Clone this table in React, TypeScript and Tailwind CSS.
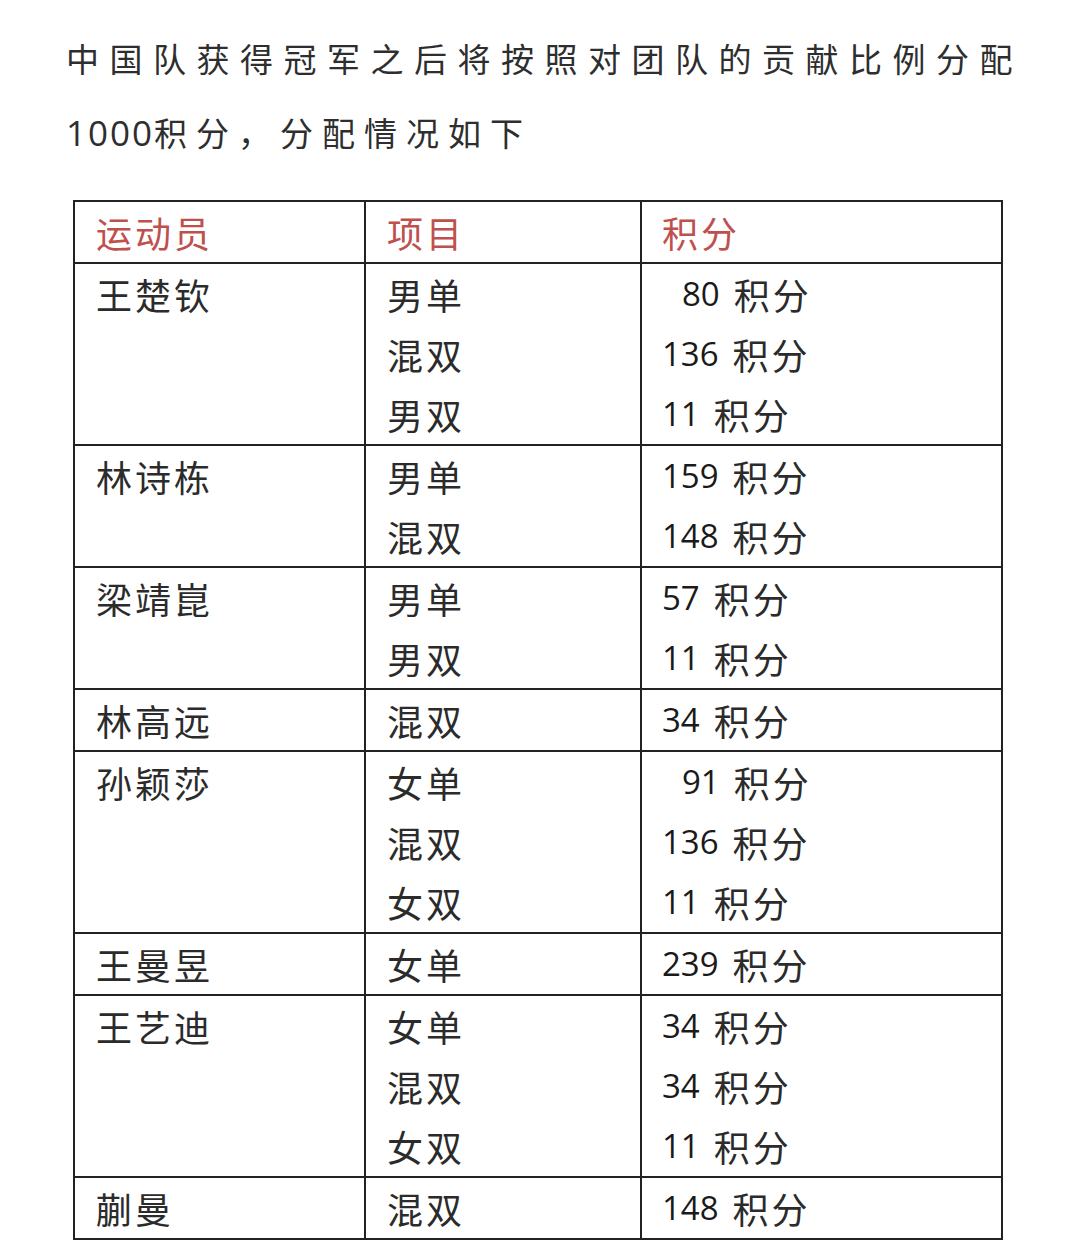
import React from "react";

type Item = { event: string; points: string; indent?: boolean };
type Row = { name: string; items: Item[] };

const rows: Row[] = [
  {
    name: "王楚钦",
    items: [
      { event: "男单", points: "80", indent: true },
      { event: "混双", points: "136" },
      { event: "男双", points: "11" },
    ],
  },
  {
    name: "林诗栋",
    items: [
      { event: "男单", points: "159" },
      { event: "混双", points: "148" },
    ],
  },
  {
    name: "梁靖崑",
    items: [
      { event: "男单", points: "57" },
      { event: "男双", points: "11" },
    ],
  },
  { name: "林高远", items: [{ event: "混双", points: "34" }] },
  {
    name: "孙颖莎",
    items: [
      { event: "女单", points: "91", indent: true },
      { event: "混双", points: "136" },
      { event: "女双", points: "11" },
    ],
  },
  { name: "王曼昱", items: [{ event: "女单", points: "239" }] },
  {
    name: "王艺迪",
    items: [
      { event: "女单", points: "34" },
      { event: "混双", points: "34" },
      { event: "女双", points: "11" },
    ],
  },
  { name: "蒯曼", items: [{ event: "混双", points: "148" }] },
];

const cjk = "font-['Noto_Sans_CJK_SC',sans-serif]";
const num = "font-['Open_Sans','Noto_Sans_CJK_SC',sans-serif]";

function Line({ children, className = "" }: { children?: React.ReactNode; className?: string }) {
  return <div className={`flex h-[60px] items-center ${className}`}>{children}</div>;
}

export default function App() {
  return (
    <div className={`min-h-[1241px] bg-white pl-[66px] pt-[21px] ${cjk}`}>
      {/* Intro text */}
      <p className="text-[33px] leading-[74px] tracking-[10.5px] text-[#2e2e2e]">
        中国队获得冠军之后将按照对团队的贡献比例分配
        <br />
        <span className={`${num} text-[35px] tracking-[2px]`}>1000</span>
        <span className="tracking-[9px]">积分，分配情况如下</span>
      </p>

      {/* Points table */}
      <table className="mt-[30px] ml-[7px] w-[928px] table-fixed border-collapse border-2 border-[#222] text-[36px] text-[#2b2b2b]">
        <colgroup>
          <col className="w-[291px]" />
          <col className="w-[276px]" />
          <col className="w-[361px]" />
        </colgroup>
        <thead>
          <tr className="text-[#c0504d]">
            <th className="border-2 border-[#222] pl-[21px] text-left font-normal">
              <Line className="tracking-[3px]">运动员</Line>
            </th>
            <th className="border-2 border-[#222] pl-[21px] text-left font-normal">
              <Line className="tracking-[3px]">项目</Line>
            </th>
            <th className="border-2 border-[#222] pl-[20px] text-left font-normal">
              <Line className="tracking-[3px]">积分</Line>
            </th>
          </tr>
        </thead>
        <tbody>
          {rows.map((row) => (
            <tr key={row.name}>
              <td className="border-2 border-[#222] pl-[21px] align-top">
                <Line className="tracking-[3px]">{row.name}</Line>
              </td>
              <td className="border-2 border-[#222] pl-[21px] align-top">
                {row.items.map((it, i) => (
                  <Line key={i} className="tracking-[3px]">
                    {it.event}
                  </Line>
                ))}
              </td>
              <td className="border-2 border-[#222] pl-[20px] align-top">
                {row.items.map((it, i) => (
                  <Line key={i} className={it.indent ? "pl-[20px]" : ""}>
                    <span className={`${num} text-[33px] text-[#1a1a1a]`}>{it.points}</span>
                    <span className="ml-[14px] tracking-[3px]">积分</span>
                  </Line>
                ))}
              </td>
            </tr>
          ))}
        </tbody>
      </table>
    </div>
  );
}
